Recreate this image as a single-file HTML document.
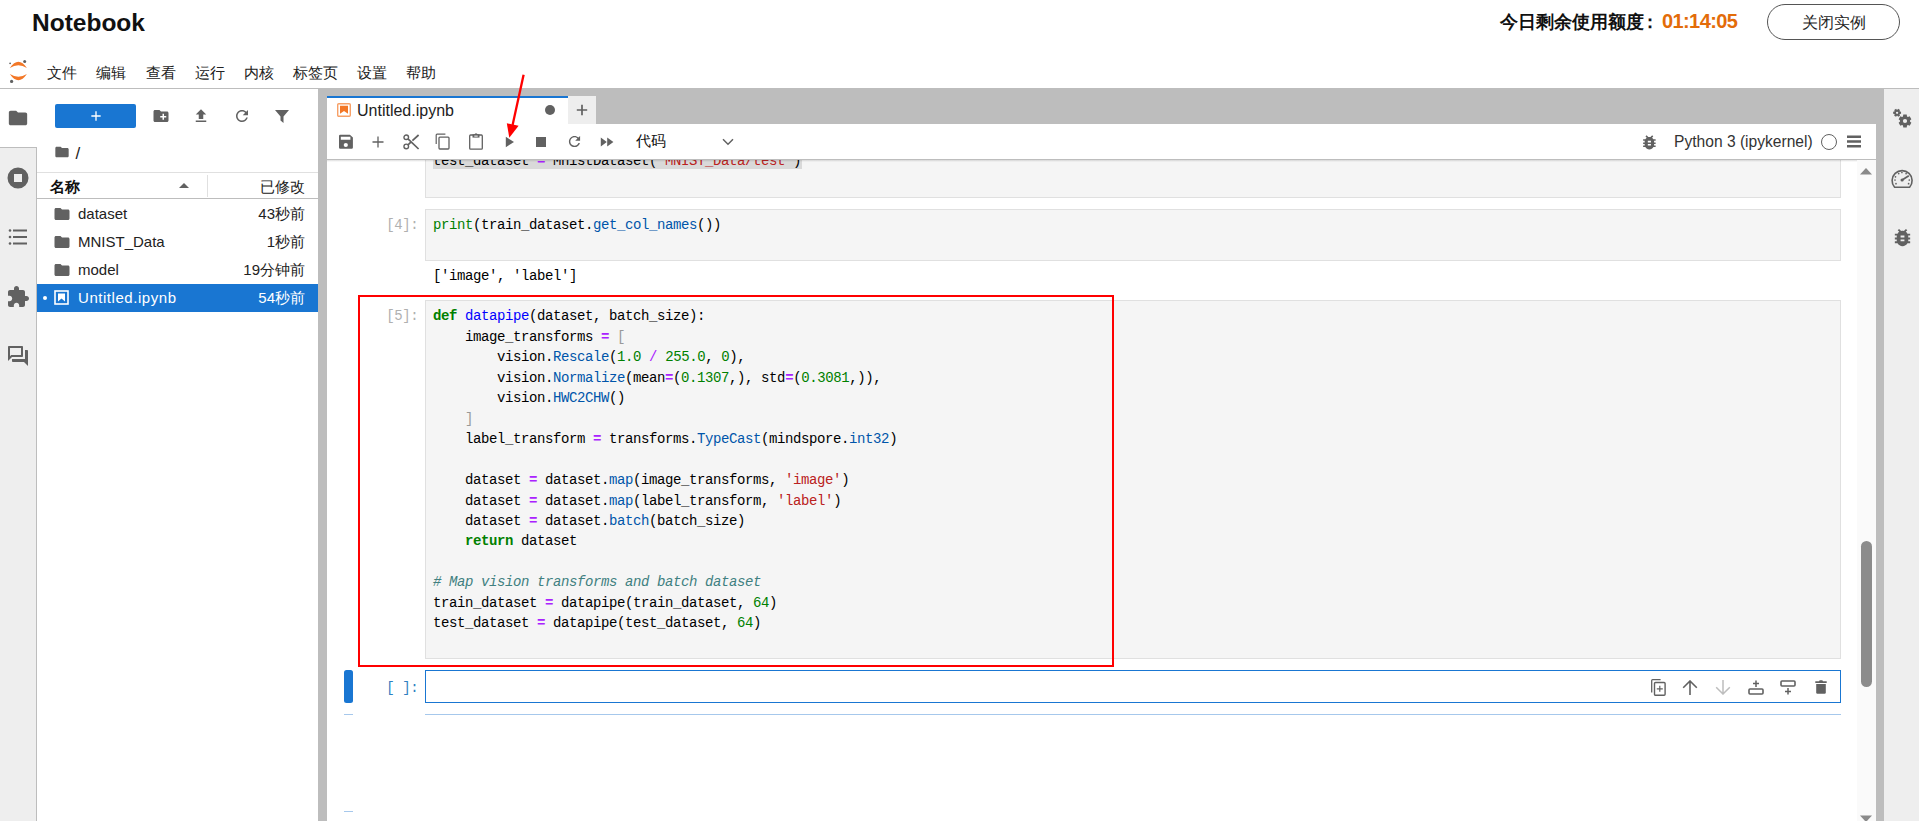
<!DOCTYPE html>
<html><head><meta charset="utf-8">
<style>
*{box-sizing:border-box;margin:0;padding:0}
html,body{width:1919px;height:821px;overflow:hidden;background:#fff;font-family:"Liberation Sans",sans-serif;color:#212121}
.a{position:absolute}
svg{display:block}
.ic{fill:#616161}
.code{font-family:"Liberation Mono",monospace;font-size:14px;letter-spacing:-0.4px;white-space:pre;color:#000}
.k{color:#008000;font-weight:bold}
.d{color:#0000ff}
.o{color:#aa22ff;font-weight:bold}
.n{color:#008000}
.s{color:#ba2121}
.p{color:#0055aa}
.c{color:#408080;font-style:italic}
.b{color:#008000}
.prompt{font-family:"Liberation Mono",monospace;font-size:14px;letter-spacing:-0.4px;color:#b0b0b0;white-space:pre}
</style></head><body>

<!-- header -->
<div class="a" style="left:32px;top:8.5px;font-size:24.5px;font-weight:bold;color:#111">Notebook</div>
<div class="a" style="left:1500px;top:9.5px;font-size:18px;font-weight:bold;color:#111;white-space:nowrap">今日剩余使用额度<span style="position:relative;left:-3.5px">：</span><span style="color:#e36c09;font-size:20px;letter-spacing:-0.6px;position:relative;top:0.5px">01:14:05</span></div>
<div class="a" style="left:1767px;top:4px;width:133px;height:36px;border:1px solid #555;border-radius:18px;font-size:16px;text-align:center;line-height:36px;color:#222">关闭实例</div>

<!-- menu bar -->
<svg class="a" style="left:5px;top:56px" width="28" height="30" viewBox="0 0 28 30">
 <path d="M4.8 11.9Q13.35 -0.2 21.9 11.9Q13.35 6.6 4.8 11.9Z" fill="#f37726"/>
 <path d="M4.8 18.0Q13.35 30.4 21.9 18.0Q13.35 23.3 4.8 18.0Z" fill="#f37726"/>
 <circle cx="19.7" cy="5.5" r="1.5" fill="#616161"/>
 <circle cx="5.1" cy="7.3" r="0.9" fill="#616161"/>
 <circle cx="6.6" cy="25.4" r="1.6" fill="#616161"/>
</svg>
<div class="a" style="left:0;top:64px;font-size:14.5px;color:#222;white-space:nowrap">
 <span class="a" style="left:47px">文件</span>
 <span class="a" style="left:96px">编辑</span>
 <span class="a" style="left:146px">查看</span>
 <span class="a" style="left:195px">运行</span>
 <span class="a" style="left:244px">内核</span>
 <span class="a" style="left:293px">标签页</span>
 <span class="a" style="left:357px">设置</span>
 <span class="a" style="left:406px">帮助</span>
</div>
<div class="a" style="left:0;top:88px;width:1919px;height:1px;background:#bdbdbd"></div>

<!-- left icon bar -->
<div class="a" style="left:0;top:89px;width:37px;height:732px;background:#eeeeee;border-right:1px solid #bdbdbd"></div>
<div class="a" style="left:0;top:89px;width:37px;height:59px;background:#fff;border-bottom:1px solid #bdbdbd"></div>
<svg class="a ic" style="left:7px;top:107px" width="22" height="22" viewBox="0 0 24 24"><path d="M10 4H4c-1.1 0-1.99.9-1.99 2L2 18c0 1.1.9 2 2 2h16c1.1 0 2-.9 2-2V8c0-1.1-.9-2-2-2h-8l-2-2z"/></svg>
<svg class="a ic" style="left:7px;top:167px" width="22" height="22" viewBox="0 0 22 22"><path fill-rule="evenodd" d="M11 0.5A10.5 10.5 0 1 0 11 21.5A10.5 10.5 0 1 0 11 0.5ZM7 7H15V15H7Z"/></svg>
<svg class="a ic" style="left:8px;top:228px" width="20" height="18" viewBox="0 0 20 18"><circle cx="2" cy="2.5" r="1.3"/><circle cx="2" cy="9" r="1.3"/><circle cx="2" cy="15.5" r="1.3"/><rect x="5" y="1.5" width="14" height="2"/><rect x="5" y="8" width="14" height="2"/><rect x="5" y="14.5" width="14" height="2"/></svg>
<svg class="a ic" style="left:6px;top:285px" width="24" height="24" viewBox="0 0 24 24"><path d="M20.5 11H19V7c0-1.1-.9-2-2-2h-4V3.5C13 2.12 11.88 1 10.5 1S8 2.12 8 3.5V5H4c-1.1 0-1.99.9-1.99 2v3.8H3.5c1.49 0 2.7 1.21 2.7 2.7s-1.21 2.7-2.7 2.7H2V20c0 1.1.9 2 2 2h3.8v-1.5c0-1.49 1.21-2.7 2.7-2.7 1.49 0 2.7 1.21 2.7 2.7V22H17c1.1 0 2-.9 2-2v-4h1.5c1.38 0 2.5-1.12 2.5-2.5S21.88 11 20.5 11z"/></svg>
<svg class="a ic" style="left:6px;top:344px" width="24" height="24" viewBox="0 0 24 24"><path d="M15 4v7H5.17L4 12.17V4h11m1-2H3c-.55 0-1 .45-1 1v14l4-4h10c.55 0 1-.45 1-1V3c0-.55-.45-1-1-1zm5 4h-2v9H6v2c0 .55.45 1 1 1h11l4 4V7c0-.55-.45-1-1-1z"/></svg>

<!-- file browser -->
<div class="a" style="left:55px;top:104px;width:81px;height:24px;background:#1976d2;border-radius:2px"></div>
<svg class="a" style="left:88px;top:108px" width="16" height="16" viewBox="0 0 24 24"><path fill="#fff" d="M19 13h-6v6h-2v-6H5v-2h6V5h2v6h6v2z"/></svg>
<svg class="a ic" style="left:151.8px;top:107px" width="18" height="18" viewBox="0 0 24 24"><path d="M20 6h-8l-2-2H4c-1.11 0-1.99.89-1.99 2L2 18c0 1.11.89 2 2 2h16c1.11 0 2-.89 2-2V8c0-1.11-.89-2-2-2zm-1 8h-3v3h-2v-3h-3v-2h3V9h2v3h3v2z"/></svg>
<svg class="a ic" style="left:192px;top:107px" width="18" height="18" viewBox="0 0 24 24"><path d="M9 16h6v-6h4l-7-7-7 7h4zm-4 2h14v2H5z"/></svg>
<svg class="a ic" style="left:233px;top:107.2px" width="18" height="18" viewBox="0 0 24 24"><path d="M17.65 6.35C16.2 4.9 14.21 4 12 4c-4.42 0-7.99 3.58-7.99 8s3.57 8 7.99 8c3.73 0 6.84-2.55 7.73-6h-2.08c-.82 2.33-3.04 4-5.65 4-3.31 0-6-2.69-6-6s2.69-6 6-6c1.66 0 3.14.69 4.22 1.78L13 11h7V4l-2.35 2.35z"/></svg>
<svg class="a ic" style="left:274px;top:108px" width="16" height="16" viewBox="0 0 16 16"><path d="M1 2h14L9.5 8.5V15L6.5 12.5V8.5Z"/></svg>

<svg class="a ic" style="left:54px;top:144px" width="16" height="16" viewBox="0 0 24 24"><path d="M10 4H4c-1.1 0-1.99.9-1.99 2L2 18c0 1.1.9 2 2 2h16c1.1 0 2-.9 2-2V8c0-1.1-.9-2-2-2h-8l-2-2z"/></svg>
<div class="a" style="left:75.5px;top:144.2px;font-size:17px;color:#222">/</div>

<div class="a" style="left:37px;top:172px;width:281px;height:1px;background:#e0e0e0"></div>
<div class="a" style="left:37px;top:198px;width:281px;height:1px;background:#bdbdbd"></div>
<div class="a" style="left:50px;top:178px;font-size:14.5px;font-weight:bold;color:#111">名称</div>
<svg class="a ic" style="left:179px;top:182px" width="10" height="7" viewBox="0 0 10 7"><path d="M0 6L5 1L10 6Z"/></svg>
<div class="a" style="left:207px;top:175px;width:1px;height:22px;background:#e0e0e0"></div>
<div class="a" style="left:200px;top:178px;width:105px;text-align:right;font-size:14.5px;color:#222">已修改</div>

<div class="a" style="left:37px;top:200px;width:281px;font-size:15px;color:#222">
 <div class="a" style="left:0;top:0;width:281px;height:28px">
  <svg class="a ic" style="left:15.5px;top:4.5px" width="18" height="18" viewBox="0 0 24 24"><path d="M10 4H4c-1.1 0-1.99.9-1.99 2L2 18c0 1.1.9 2 2 2h16c1.1 0 2-.9 2-2V8c0-1.1-.9-2-2-2h-8l-2-2z"/></svg>
  <span class="a" style="left:41px;top:5px">dataset</span><span class="a" style="right:13px;top:5px">43秒前</span>
 </div>
 <div class="a" style="left:0;top:28px;width:281px;height:28px">
  <svg class="a ic" style="left:15.5px;top:4.5px" width="18" height="18" viewBox="0 0 24 24"><path d="M10 4H4c-1.1 0-1.99.9-1.99 2L2 18c0 1.1.9 2 2 2h16c1.1 0 2-.9 2-2V8c0-1.1-.9-2-2-2h-8l-2-2z"/></svg>
  <span class="a" style="left:41px;top:5px">MNIST_Data</span><span class="a" style="right:13px;top:5px">1秒前</span>
 </div>
 <div class="a" style="left:0;top:56px;width:281px;height:28px">
  <svg class="a ic" style="left:15.5px;top:4.5px" width="18" height="18" viewBox="0 0 24 24"><path d="M10 4H4c-1.1 0-1.99.9-1.99 2L2 18c0 1.1.9 2 2 2h16c1.1 0 2-.9 2-2V8c0-1.1-.9-2-2-2h-8l-2-2z"/></svg>
  <span class="a" style="left:41px;top:5px">model</span><span class="a" style="right:13px;top:5px">19分钟前</span>
 </div>
 <div class="a" style="left:0;top:84px;width:281px;height:28px;background:#1976d2;color:#fff">
  <div class="a" style="left:6px;top:12px;width:4px;height:4px;border-radius:2px;background:#fff"></div>
  <svg class="a" style="left:17px;top:6px" width="15" height="15" viewBox="0 0 15 15"><rect x="1" y="1" width="13" height="13" fill="none" stroke="#fff" stroke-width="1.6"/><path d="M4 3.5h7v8L7.5 8.5 4 11.5Z" fill="#fff"/></svg>
  <span class="a" style="left:41px;top:5px;letter-spacing:0.55px">Untitled.ipynb</span><span class="a" style="right:13px;top:5px">54秒前</span>
 </div>
</div>

<!-- splitters / frame -->
<div class="a" style="left:318px;top:89px;width:9px;height:732px;background:#bdbdbd"></div>
<div class="a" style="left:327px;top:89px;width:1557px;height:35px;background:#bdbdbd"></div>
<div class="a" style="left:1876px;top:124px;width:8px;height:697px;background:#bdbdbd"></div>
<div class="a" style="left:1884px;top:89px;width:35px;height:732px;background:#eeeeee"></div>

<!-- right sidebar icons -->
<svg class="a" style="left:1886px;top:100px" width="32" height="35" viewBox="0 0 32 35"><path fill="#616161" fill-rule="evenodd" d="M15.06 11.74 L15.06 13.86 L13.84 14.02 L13.53 14.56 L14.00 15.70 L12.16 16.76 L11.41 15.78 L10.79 15.78 L10.04 16.76 L8.20 15.70 L8.67 14.56 L8.36 14.02 L7.14 13.86 L7.14 11.74 L8.36 11.58 L8.67 11.04 L8.20 9.90 L10.04 8.84 L10.79 9.82 L11.41 9.82 L12.16 8.84 L14.00 9.90 L13.53 11.04 L13.84 11.58ZM12.25 12.80A1.15 1.15 0 1 0 9.95 12.80A1.15 1.15 0 1 0 12.25 12.80ZM17.29 14.62 L20.71 14.62 L21.03 16.43 L21.94 16.95 L23.67 16.33 L25.38 19.29 L23.97 20.48 L23.97 21.52 L25.38 22.71 L23.67 25.67 L21.94 25.05 L21.03 25.57 L20.71 27.38 L17.29 27.38 L16.97 25.57 L16.06 25.05 L14.33 25.67 L12.62 22.71 L14.03 21.52 L14.03 20.48 L12.62 19.29 L14.33 16.33 L16.06 16.95 L16.97 16.43ZM21.10 21.00A2.1 2.1 0 1 0 16.90 21.00A2.1 2.1 0 1 0 21.10 21.00Z"/></svg>
<svg class="a ic" style="left:1891px;top:168px" width="23" height="21" viewBox="0 0 23 21"><path d="M3.6 19.2A10 10 0 1 1 18.6 19.2Z" fill="none" stroke="#616161" stroke-width="1.6" stroke-linejoin="round"/><circle cx="4.5" cy="8.8" r="0.85"/><circle cx="7.7" cy="5.6" r="0.85"/><circle cx="10.9" cy="4.5" r="0.85"/><circle cx="15.1" cy="5.6" r="0.85"/><circle cx="4" cy="12" r="0.85"/><circle cx="5" cy="15.7" r="0.85"/><circle cx="18.3" cy="12" r="0.85"/><circle cx="17.6" cy="15.7" r="0.85"/><path d="M11.1 12L17.8 7.7" stroke="#616161" stroke-width="1.7"/><circle cx="11.1" cy="12" r="1.6"/></svg>
<svg class="a ic" style="left:1890.7px;top:225.8px" width="23" height="23" viewBox="0 0 24 24"><path d="M20 8h-2.81c-.45-.78-1.07-1.45-1.82-1.96L17 4.41 15.59 3l-2.17 2.17C12.96 5.06 12.49 5 12 5c-.49 0-.96.06-1.41.17L8.41 3 7 4.41l1.62 1.63C7.88 6.55 7.26 7.22 6.81 8H4v2h2.09c-.05.33-.09.66-.09 1v1H4v2h2v1c0 .34.04.67.09 1H4v2h2.81c1.040 1.79 2.97 3 5.19 3s4.150-1.21 5.19-3H20v-2h-2.09c.05-.33.09-.66.09-1v-1h2v-2h-2v-1c0-.34-.04-.67-.09-1H20V8zm-6 8h-4v-2h4v2zm0-4h-4v-2h4v2z"/></svg>

<!-- notebook panel -->
<div class="a" style="left:327px;top:96px;width:241px;height:28px;background:#fff;border-top:2px solid #1976d2"></div>
<div class="a" style="left:568px;top:96px;width:28px;height:28px;background:#eeeeee"></div>
<svg class="a" style="left:576px;top:104px" width="12" height="12" viewBox="0 0 12 12"><path d="M6 0.8V11.2M0.8 6H11.2" stroke="#616161" stroke-width="1.7"/></svg>
<svg class="a" style="left:337px;top:103px" width="14" height="14" viewBox="0 0 14 14"><rect x="0.7" y="0.7" width="12.6" height="12.6" rx="1" fill="none" stroke="#f37726" stroke-width="1.4" opacity="0.7"/><path d="M3 2.8h8v8L7 8 3 10.8Z" fill="#f37726"/></svg>
<div class="a" style="left:357px;top:102px;font-size:16px;color:#222">Untitled.ipynb</div>
<div class="a" style="left:545px;top:105px;width:10px;height:10px;border-radius:5px;background:#616161"></div>




<!-- notebook content -->
<div class="a" style="left:327px;top:160px;width:1549px;height:661px;overflow:hidden;background:#fff">
 <div class="a" style="left:98px;top:-60px;width:1416px;height:98px;background:#f5f5f5;border:1px solid #e0e0e0"></div>
 <div class="a" style="left:106px;top:-12px;width:369px;height:21px;background:#d9d9d9"></div>
 <div class="a code" style="left:106px;top:-8.70px;height:20.47px;line-height:20.47px">test_dataset <span class="o">=</span> MnistDataset(<span class="s">'MNIST_Data/test'</span>)</div>

 <div class="a" style="left:98px;top:49px;width:1416px;height:52px;background:#f5f5f5;border:1px solid #e0e0e0"></div>
 <div class="a prompt" style="left:59.3px;top:55.30px;line-height:20.47px">[4]:</div>
 <div class="a code" style="left:106px;top:55.30px;height:20.47px;line-height:20.47px"><span class="b">print</span>(train_dataset.<span class="p">get_col_names</span>())</div>
 <div class="a code" style="left:106px;top:105.70px;height:20.47px;line-height:20.47px">['image', 'label']</div>

 <div class="a" style="left:98px;top:140px;width:1416px;height:359px;background:#f5f5f5;border:1px solid #e0e0e0"></div>
 <div class="a prompt" style="left:59.3px;top:146.30px;line-height:20.47px">[5]:</div>
 <div class="a code" style="left:106px;top:146.30px;height:20.47px;line-height:20.47px"><span class="k">def</span> <span class="d">datapipe</span>(dataset, batch_size):</div>
<div class="a code" style="left:106px;top:166.77px;height:20.47px;line-height:20.47px">    image_transforms <span class="o">=</span> <span style="color:#999">[</span></div>
<div class="a code" style="left:106px;top:187.24px;height:20.47px;line-height:20.47px">        vision.<span class="p">Rescale</span>(<span class="n">1.0</span> <span class="o" style="font-weight:normal">/</span> <span class="n">255.0</span>, <span class="n">0</span>),</div>
<div class="a code" style="left:106px;top:207.71px;height:20.47px;line-height:20.47px">        vision.<span class="p">Normalize</span>(mean<span class="o">=</span>(<span class="n">0.1307</span>,), std<span class="o">=</span>(<span class="n">0.3081</span>,)),</div>
<div class="a code" style="left:106px;top:228.18px;height:20.47px;line-height:20.47px">        vision.<span class="p">HWC2CHW</span>()</div>
<div class="a code" style="left:106px;top:248.65px;height:20.47px;line-height:20.47px">    <span style="color:#999">]</span></div>
<div class="a code" style="left:106px;top:269.12px;height:20.47px;line-height:20.47px">    label_transform <span class="o">=</span> transforms.<span class="p">TypeCast</span>(mindspore.<span class="p">int32</span>)</div>
<div class="a code" style="left:106px;top:289.59px;height:20.47px;line-height:20.47px"></div>
<div class="a code" style="left:106px;top:310.06px;height:20.47px;line-height:20.47px">    dataset <span class="o">=</span> dataset.<span class="p">map</span>(image_transforms, <span class="s">'image'</span>)</div>
<div class="a code" style="left:106px;top:330.53px;height:20.47px;line-height:20.47px">    dataset <span class="o">=</span> dataset.<span class="p">map</span>(label_transform, <span class="s">'label'</span>)</div>
<div class="a code" style="left:106px;top:351.00px;height:20.47px;line-height:20.47px">    dataset <span class="o">=</span> dataset.<span class="p">batch</span>(batch_size)</div>
<div class="a code" style="left:106px;top:371.47px;height:20.47px;line-height:20.47px">    <span class="k">return</span> dataset</div>
<div class="a code" style="left:106px;top:391.94px;height:20.47px;line-height:20.47px"></div>
<div class="a code" style="left:106px;top:412.41px;height:20.47px;line-height:20.47px"><span class="c"># Map vision transforms and batch dataset</span></div>
<div class="a code" style="left:106px;top:432.88px;height:20.47px;line-height:20.47px">train_dataset <span class="o">=</span> datapipe(train_dataset, <span class="n">64</span>)</div>
<div class="a code" style="left:106px;top:453.35px;height:20.47px;line-height:20.47px">test_dataset <span class="o">=</span> datapipe(test_dataset, <span class="n">64</span>)</div>
 <div class="a" style="left:31px;top:134.5px;width:755.5px;height:372.5px;border:2px solid #ff0000"></div>

 <div class="a" style="left:17px;top:510px;width:9px;height:33px;background:#1976d2;border-radius:2.5px"></div>
 <div class="a prompt" style="left:59.3px;top:518.30px;line-height:20.47px;color:#307fc1">[ ]:</div>
 <div class="a" style="left:98px;top:510px;width:1416px;height:33px;background:#fff;border:1px solid #1976d2"></div>
 <div class="a" style="left:98px;top:554px;width:1416px;height:1px;background:#a6c8ec"></div>
 <div class="a" style="left:17px;top:554px;width:9px;height:1px;background:#a6c8ec"></div>
 <div class="a" style="left:17px;top:651px;width:9px;height:1px;background:#a6c8ec"></div>
</div>
<!-- scrollbar -->
<div class="a" style="left:1857px;top:160px;width:19px;height:661px;background:#fafafa"></div>
<svg class="a" style="left:1859px;top:167px" width="14" height="8" viewBox="0 0 14 8"><path d="M1 7.5L7 1L13 7.5Z" fill="#8a8a8a"/></svg>
<div class="a" style="left:1861px;top:541px;width:11px;height:146px;border-radius:5.5px;background:#8c8c8c"></div>
<svg class="a" style="left:1859px;top:815px" width="14" height="8" viewBox="0 0 14 8"><path d="M1 0.5L7 7L13 0.5Z" fill="#8a8a8a"/></svg>

<!-- cell toolbar -->
<svg class="a" style="left:1651px;top:678.5px" width="15" height="17" viewBox="0 0 15 17"><path d="M0.7 13.5V1.6Q0.7 0.7 1.6 0.7H9.6" fill="none" stroke="#616161" stroke-width="1.3"/><rect x="3.5" y="3.5" width="10.6" height="12.7" rx="1" fill="none" stroke="#616161" stroke-width="1.4"/><path d="M8.8 6.8V12.8M5.8 9.8H11.8" stroke="#616161" stroke-width="1.2"/></svg>
<svg class="a" style="left:1682px;top:679.5px" width="16" height="15" viewBox="0 0 16 15"><path d="M8 1V15M1.2 7.8L8 1L14.8 7.8" fill="none" stroke="#616161" stroke-width="1.6"/></svg>
<svg class="a" style="left:1715px;top:679.5px" width="16" height="15" viewBox="0 0 16 15"><path d="M8 0V14M1.2 7.2L8 14L14.8 7.2" fill="none" stroke="#bdbdbd" stroke-width="1.5"/></svg>
<svg class="a" style="left:1748px;top:680px" width="16" height="15" viewBox="0 0 16 15"><rect x="1" y="9" width="14" height="5" rx="1" fill="none" stroke="#616161" stroke-width="1.6"/><path d="M8 0.5V7M5 3.5H11" stroke="#616161" stroke-width="1.5"/></svg>
<svg class="a" style="left:1780px;top:680px" width="16" height="15" viewBox="0 0 16 15"><rect x="1" y="1" width="14" height="5" rx="1" fill="none" stroke="#616161" stroke-width="1.6"/><path d="M8 8V14.5M5 11.5H11" stroke="#616161" stroke-width="1.5"/></svg>
<svg class="a" style="left:1815px;top:680px" width="12" height="14" viewBox="0 0 12 14"><path d="M0.3 1.3H4L4.7 0.3H7.3L8 1.3H11.7V3H0.3Z" fill="#616161"/><path d="M1.2 4H10.8V12.6Q10.8 13.8 9.6 13.8H2.4Q1.2 13.8 1.2 12.6Z" fill="#616161"/></svg>
<div class="a" style="left:327px;top:124px;width:1549px;height:36px;background:#fff;border-bottom:1px solid #bdbdbd"></div>
<div class="a" style="left:327px;top:160px;width:1530px;height:2px;background:linear-gradient(rgba(0,0,0,0.13),rgba(0,0,0,0))"></div>
<!-- toolbar icons -->
<svg class="a" style="left:339px;top:134px" width="14" height="15" viewBox="0 0 14 15"><path fill="#616161" fill-rule="evenodd" d="M1.2 0.7H10.9L13.9 3.6V13.5Q13.9 14.7 12.7 14.7H1.2Q0 14.7 0 13.5V1.9Q0 0.7 1.2 0.7ZM1.8 2.8V5.75H11.4V2.8Z"/><circle cx="6.8" cy="11" r="2.1" fill="#fff"/></svg>
<svg class="a" style="left:372px;top:136px" width="12" height="12" viewBox="0 0 12 12"><path d="M6 0.5V11.5M0.5 6H11.5" stroke="#616161" stroke-width="1.3"/></svg>
<svg class="a" style="left:402px;top:134px" width="18" height="16" viewBox="0 0 18 16"><circle cx="4.25" cy="3.25" r="2.3" fill="none" stroke="#616161" stroke-width="1.4"/><circle cx="4.25" cy="12.4" r="2.3" fill="none" stroke="#616161" stroke-width="1.4"/><path d="M6 4.9L16.6 15M6 10.8L8.9 8.1M10.4 6.7L16.6 1" stroke="#616161" stroke-width="1.7"/></svg>
<svg class="a" style="left:435px;top:133px" width="16" height="17" viewBox="0 0 16 17"><path d="M1.2 11V2.1Q1.2 1.2 2.1 1.2H10.4" fill="none" stroke="#616161" stroke-width="1.2"/><rect x="4" y="4.2" width="10" height="11.8" rx="0.9" fill="none" stroke="#616161" stroke-width="1.3"/></svg>
<svg class="a" style="left:469px;top:133px" width="14" height="17" viewBox="0 0 14 17"><rect x="0.7" y="2" width="12.6" height="14.2" rx="0.9" fill="none" stroke="#616161" stroke-width="1.3"/><path d="M3.5 1.3H10.5V4.6H3.5Z" fill="#616161"/><circle cx="7" cy="1.8" r="1.5" fill="#616161"/><path d="M5.3 2.6H8.7V3.6H5.3Z" fill="#fff"/></svg>
<svg class="a" style="left:505px;top:136px" width="10" height="12" viewBox="0 0 10 12"><path d="M0.8 0.8V11.2L9 6Z" fill="#616161"/></svg>
<div class="a" style="left:536px;top:137px;width:10px;height:10px;background:#616161"></div>
<svg class="a" style="left:566.5px;top:134.3px" width="15" height="15" viewBox="0 0 24 24"><path fill="#616161" d="M17.65 6.35C16.2 4.9 14.21 4 12 4c-4.42 0-7.99 3.58-7.99 8s3.57 8 7.990 8c3.73 0 6.84-2.55 7.73-6h-2.08c-.82 2.33-3.04 4-5.65 4-3.31 0-6-2.690-6-6s2.69-6 6-6c1.66 0 3.14.69 4.22 1.78L13 11h7V4l-2.35 2.35z" transform="translate(12 12) scale(1.12) translate(-12 -12)"/></svg>
<svg class="a" style="left:600px;top:137px" width="14" height="10" viewBox="0 0 14 10"><path d="M0.8 0.5V9.5L6.8 5ZM7.2 0.5V9.5L13.4 5Z" fill="#616161"/></svg>
<div class="a" style="left:636px;top:132.3px;font-size:14.5px;color:#111">代码</div>
<svg class="a" style="left:722px;top:138px" width="12" height="8" viewBox="0 0 12 8"><path d="M1 1.2L6 6.2L11 1.2" fill="none" stroke="#616161" stroke-width="1.5"/></svg>

<svg class="a" style="left:1640.4px;top:133.2px" width="18.75" height="18.75" viewBox="0 0 24 24"><path fill="#616161" d="M20 8h-2.81c-.45-.78-1.07-1.45-1.82-1.96L17 4.41 15.59 3l-2.17 2.17C12.96 5.06 12.49 5 12 5c-.49 0-.96.06-1.41.17L8.41 3 7 4.41l1.62 1.63C7.88 6.55 7.26 7.22 6.81 8H4v2h2.09c-.05.33-.09.66-.09 1v1H4v2h2v1c0 .34.04.67.09 1H4v2h2.81c1.04 1.79 2.97 3 5.19 3s4.15-1.21 5.19-3H20v-2h-2.09c.05-.33.09-.66.09-1v-1h2v-2h-2v-1c0-.34-.04-.67-.09-1H20V8zm-6 8h-4v-2h4v2zm0-4h-4v-2h4v2z"/></svg>
<div class="a" style="left:1674px;top:133px;font-size:15.6px;color:#333;white-space:nowrap">Python 3 (ipykernel)</div>
<div class="a" style="left:1821px;top:134px;width:16px;height:16px;border-radius:8px;border:1.3px solid #616161"></div>
<svg class="a" style="left:1847px;top:135px" width="14" height="13" viewBox="0 0 14 13"><path d="M0 0.5H14V3H0ZM0 5.2H14V7.7H0ZM0 10H14V12.5H0Z" fill="#616161"/></svg>

<svg class="a" style="left:0;top:0;pointer-events:none" width="1919" height="821"><path d="M523.6 74.7L512.6 125" stroke="#ff0000" stroke-width="2.3" fill="none"/><path d="M506.8 123.3L518.6 125.7L509.3 137.8Z" fill="#ff0000"/></svg>
</body></html>
